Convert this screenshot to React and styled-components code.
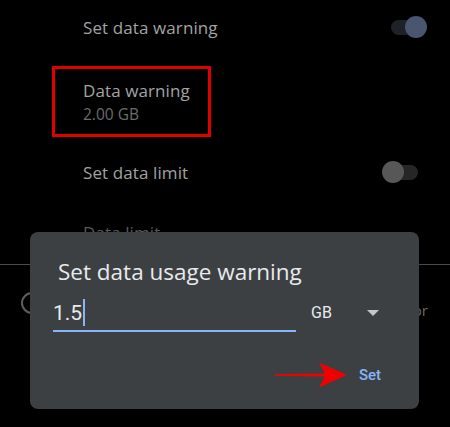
import React from 'react';
import styled, { createGlobalStyle } from 'styled-components';

const Global = createGlobalStyle`
  body {
    margin: 0;
    background: #000;
  }
`;

const Screen = styled.div`
  position: relative;
  width: 450px;
  height: 427px;
  overflow: hidden;
  background: #000;
  font-family: "Open Sans", Roboto, sans-serif;
`;

const Row = styled.div`
  display: flex;
  align-items: center;
  justify-content: space-between;
  height: ${p => p.h}px;
  padding-left: 83px;
  padding-right: ${p => p.pr}px;
`;

const Title = styled.div`
  font-size: 17px;
  color: ${p => p.dim ? '#5a5a5a' : '#a3a3a3'};
  letter-spacing: 0.1px;
`;

const Summary = styled.div`
  font-size: 15.5px;
  color: #6b6b6b;
  margin-top: 1px;
`;

const Marked = styled.div`
  margin: 12px 0 0 52px;
  width: 125px;
  height: 65px;
  border: 3px solid #e00000;
  padding-left: 28px;
  display: flex;
  flex-direction: column;
  justify-content: center;
  box-sizing: content-box;
`;

const Track = styled.div`
  position: relative;
  width: 33px;
  height: 15px;
  border-radius: 8px;
  background: ${p => p.track};
`;

const Thumb = styled.div`
  position: absolute;
  top: -4px;
  ${p => (p.on ? 'right: -3px;' : 'left: -3px;')}
  width: 22px;
  height: 22px;
  border-radius: 50%;
  background: ${p => p.color};
`;

const Divider = styled.div`
  height: 1px;
  background: #4a4a4a;
  margin-top: ${p => p.mt}px;
`;

const Bottom = styled.div`
  display: flex;
  align-items: center;
  justify-content: space-between;
  padding: 21px 22px 0 21px;
`;

const Ring = styled.div`
  width: 18px;
  height: 18px;
  border: 2px solid #5c5c5c;
  border-radius: 50%;
`;

const Faint = styled.div`
  font-size: 15px;
  color: #6a6a6a;
  margin-top: 14px;
`;

const Dialog = styled.div`
  position: absolute;
  left: 30px;
  top: 232px;
  width: 389px;
  height: 177px;
  border-radius: 8px;
  background: #3c4043;
  box-sizing: border-box;
  padding: 27px 0 0 23px;
`;

const DialogTitle = styled.div`
  font-size: 22.5px;
  font-weight: 500;
  color: #e8eaed;
  padding-left: 5px;
  line-height: 26px;
`;

const InputRow = styled.div`
  display: flex;
  align-items: flex-start;
  margin-top: 10px;
`;

const Field = styled.div`
  width: 243px;
  height: 35px;
  border-bottom: 2px solid #8ab4f8;
  display: flex;
  align-items: center;
  font-family: Roboto, sans-serif;
  font-size: 21px;
  color: #e8eaed;
`;

const Caret = styled.span`
  display: inline-block;
  width: 2px;
  height: 27px;
  background: #8ab4f8;
  margin-left: 1px;
`;

const Unit = styled.div`
  display: flex;
  align-items: center;
  height: 35px;
  margin-left: 15px;
  font-family: Roboto, sans-serif;
  font-size: 16px;
  color: #e8eaed;
`;

const Caretdown = styled.span`
  width: 0;
  height: 0;
  margin-left: 35px;
  border-left: 6px solid transparent;
  border-right: 6px solid transparent;
  border-top: 6px solid #c4c7c5;
`;

const Actions = styled.div`
  display: flex;
  align-items: center;
  justify-content: flex-end;
  padding-right: 38px;
  margin-top: 30px;
  gap: 12px;
`;

const SetButton = styled.div`
  font-family: Roboto, sans-serif;
  font-size: 15px;
  font-weight: 500;
  color: #8ab4f8;
`;

const Arrow = () => (
  <svg width="72" height="26" viewBox="0 0 72 26">
    <path d="M0 12.3 L50 11.4 L44 0.5 L72 13 L44 25.5 L50 14.6 L0 13.7 Z" fill="#f20000" />
  </svg>
);

export default function App() {
  return (
    <Screen>
      <Global />
      <Row h={54} pr={26}>
        <Title>Set data warning</Title>
        <Track track="#1e2127">
          <Thumb on color="#4a5570" />
        </Track>
      </Row>
      <Marked>
        <Title>Data warning</Title>
        <Summary>2.00 GB</Summary>
      </Marked>
      <Row h={70} pr={32}>
        <Title>Set data limit</Title>
        <Track track="#262626">
          <Thumb color="#575757" />
        </Track>
      </Row>
      <Row h={50} pr={32}>
        <Title dim>Data limit</Title>
      </Row>
      <Divider mt={7} />
      <Bottom>
        <Ring />
        <Faint>or</Faint>
      </Bottom>
      <Dialog>
        <DialogTitle>Set data usage warning</DialogTitle>
        <InputRow>
          <Field>
            1.5<Caret />
          </Field>
          <Unit>
            GB<Caretdown />
          </Unit>
        </InputRow>
        <Actions>
          <Arrow />
          <SetButton>Set</SetButton>
        </Actions>
      </Dialog>
    </Screen>
  );
}
